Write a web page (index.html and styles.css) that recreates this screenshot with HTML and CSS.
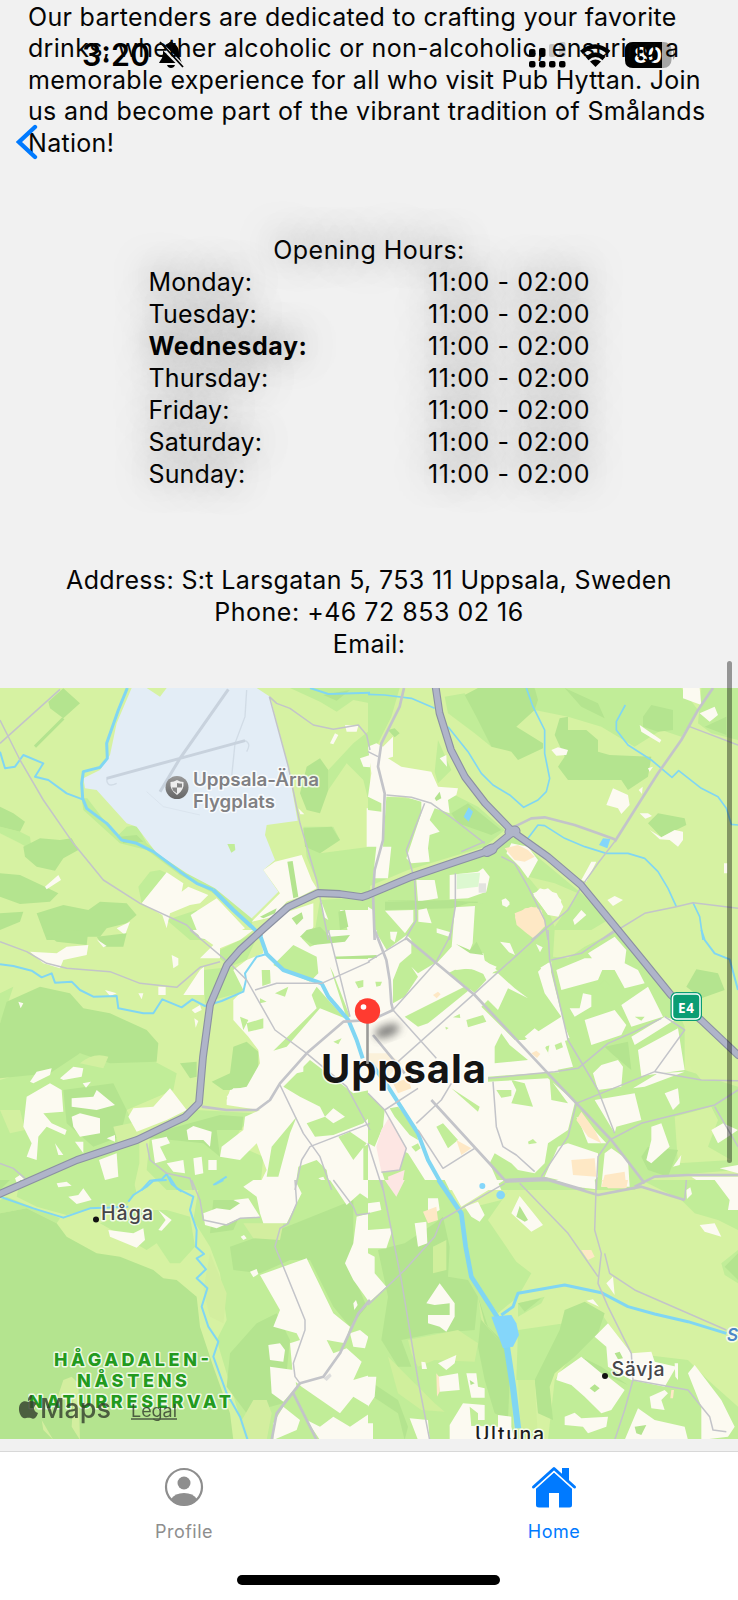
FILE: index.html
```html
<!DOCTYPE html>
<html lang="en">
<head>
<meta charset="utf-8">
<title>Pub Hyttan</title>
<link rel="stylesheet" href="styles.css">
</head>
<body>
<div class="screen">
  <svg class="status" viewBox="0 0 738 90" width="738" height="90">
    <text x="82" y="66" class="clock" textLength="68" lengthAdjust="spacingAndGlyphs">3:20</text>
    <path d="M159 63C161 59 163 58 163 53C163 46 166 44 169 43C170 41 172 41 173 43C177 45 179 48 179 53C179 58 181 60 182 63ZM167 65h8c-1 4-7 4-8 0z"/>
    <path d="M158 42L183 67" stroke="#f1f1f1" stroke-width="5"/>
    <path d="M160 42L183 67" stroke="#000" stroke-width="1.8"/>
    <g>
      <rect x="529" y="61" width="6.500" height="6.500" rx="2"/><rect x="539" y="61" width="6.500" height="6.500" rx="2"/>
      <rect x="549" y="61" width="6.500" height="6.500" rx="2"/><rect x="559" y="61" width="6.500" height="6.500" rx="2"/>
      <rect x="529" y="49" width="6.500" height="8" rx="2"/><rect x="539" y="48" width="6.500" height="9" rx="2"/>
      <rect x="549" y="44" width="6.500" height="13" rx="2" fill="#c5c5c5"/><rect x="559" y="42" width="6.500" height="15" rx="2" fill="#c5c5c5"/>
    </g>
    <g fill="none" stroke="#000" stroke-width="4.500"><path d="M581.500 52.500Q595 40.500 609 52.500"/><path d="M587 58.500Q595.500 51 604 58.500"/></g>
    <path d="M590 61.500Q595.500 57.500 601 61.500L595.500 67Z"/>
    <rect x="625" y="42" width="46.500" height="26" rx="8" fill="#a5a5a5"/>
    <path d="M673 50q4 5 0 10z" fill="#a5a5a5"/>
    <path d="M633 42H662V68H633Q625 68 625 60V50Q625 42 633 42Z"/>
    <text x="634" y="63" class="battery" textLength="28" lengthAdjust="spacingAndGlyphs">80</text>
  </svg>
  <svg class="back" viewBox="0 0 24 38" width="24" height="38"><path d="M19 3L3 18L19 33" fill="none" stroke="#007aff" stroke-width="4.300" stroke-linecap="round"/></svg>

  <p class="about"><span class="l1">Our bartenders are dedicated to crafting your favorite</span><span class="l2">drinks, whether alcoholic or non-alcoholic, ensuring a</span><span class="l3">memorable experience for all who visit Pub Hyttan. Join</span><span class="l4">us and become part of the vibrant tradition of Smålands</span><span class="l5">Nation!</span></p>

  <section class="hours">
    <h2 class="hours-title">Opening Hours:</h2>
    <div class="row"><span>Monday:</span><span class="time">11:00 - 02:00</span></div>
    <div class="row"><span>Tuesday:</span><span class="time">11:00 - 02:00</span></div>
    <div class="row"><span class="today">Wednesday:</span><span class="time">11:00 - 02:00</span></div>
    <div class="row"><span>Thursday:</span><span class="time">11:00 - 02:00</span></div>
    <div class="row"><span>Friday:</span><span class="time">11:00 - 02:00</span></div>
    <div class="row"><span>Saturday:</span><span class="time">11:00 - 02:00</span></div>
    <div class="row"><span>Sunday:</span><span class="time">11:00 - 02:00</span></div>
  </section>

  <section class="contact">
    <div class="address">Address: S:t Larsgatan 5, 753 11 Uppsala, Sweden</div>
    <div class="phone">Phone: +46 72 853 02 16</div>
    <div class="email">Email:</div>
  </section>

  <svg class="map" viewBox="0 688 738 751" width="738" height="751">
    <defs>
      <filter id="soft" x="-50%" y="-50%" width="200%" height="200%"><feGaussianBlur stdDeviation="4"/></filter>
      <linearGradient id="badge" x1="0" y1="0" x2="0" y2="1"><stop offset="0" stop-color="#999"/><stop offset="1" stop-color="#666"/></linearGradient>
    </defs>
    <rect y="688" width="738" height="751" fill="#d6f2a2"/>

    <!-- land cover -->
    <g transform="translate(0 680) scale(.33333)">
      <path class="mid" d="M0 440L60 455 90 470 95 510 60 490 0 460ZM245 355L262 355 350 470 380 440 410 435 440 490 560 580 645 622 760 720 750 745 640 640 540 585 440 510 360 490 250 390ZM415 620L450 575 480 570 500 580 425 670ZM870 24L1110 24 1110 70 1060 60 1010 95 960 65ZM985 270L1060 190 1110 150 1110 380 1090 300 1040 250 985 330ZM910 440L1000 440 1020 480 960 520 1110 500 1110 640 960 630 920 530ZM960 660L1110 650 1110 780 940 780ZM500 720L590 690 640 770 640 780 570 780Z"/>
      <path class="dark" d="M70 500L120 475 180 480 215 475 235 510 190 535 165 572 110 560 75 530ZM0 580L60 585 135 620 175 640 150 665 60 672 0 650ZM0 380L40 400 75 425 60 455 0 440ZM110 700L190 675 265 690 300 665 380 670 410 705 380 730 320 745 300 770 230 770 220 780 140 780ZM0 700L70 695 60 725 0 750ZM145 65L190 25 240 70 190 115 150 85ZM920 260L960 235 985 270 985 330 960 400 920 390 900 340ZM910 445L995 440 1020 480 960 520 915 500ZM360 470L410 465 430 485 370 490ZM970 45L1050 30 1010 62Z"/>
      <path d="M190 115L105 200" stroke="#b3e38f" stroke-width="9"/>
      <path class="airport" d="M395 24L440 24 480 50 500 24 770 24 810 50 860 240 893 422 800 435 795 465 825 540 790 570 835 635 755 715 645 625 560 580 470 520 410 440 380 430 290 330 255 325 250 295 300 270 330 225 350 130Z"/>
      <path class="mid" d="M682 492l22 0 2 18-12 8z"/>
      <g fill="none" stroke="#c8d2dd"><path stroke-width="9" d="M320 295L540 235 735 182M685 28L540 235 480 335"/><path stroke-width="4" d="M740 30L735 110 705 190 695 290M735 182Q755 190 740 215M320 295Q320 325 350 310" opacity=".65"/><path stroke-width="2" d="M440 335L490 380 600 405" opacity=".5"/></g>
      <path class="urban" d="M425 670L500 577 550 610 545 635 565 620 625 645 600 670 570 675 510 700 500 745 487 705ZM572 705L650 655 735 745 700 765 640 780 600 775ZM135 620L175 585 183 600 140 628ZM350 745L390 725 375 765ZM790 570L825 545 905 525 935 600 950 625 900 650 860 665 820 710 755 725 840 640ZM850 700L940 670 940 740 920 780 780 780 800 740ZM1020 690L1110 690 1110 780 1050 780 1040 740ZM990 190L1005 160 1015 165 1000 193ZM1035 135L1075 137 1070 155 1040 155ZM1080 235L1110 225 1110 262 1090 260ZM1100 385h10v115h-10zM960 655L985 720 970 710ZM895 385l18 18-12 0z"/>
      <path class="dark" d="M862 545L878 543 895 650 880 655ZM875 715L905 697 910 715 890 735ZM780 710l50-25-5 15-35 15z"/>
    </g>
    <g transform="translate(368 680) scale(.33333)">
      <path class="mid" d="M0 24L95 24 70 110 30 190 0 200ZM210 180L250 270 210 310 200 275ZM230 50L290 40 330 110 370 200 320 160 280 130 240 100ZM500 24L940 24 990 90 940 170 880 150 800 200 700 140 600 110 500 90ZM170 360L250 340 330 380 410 450 350 500 120 570 0 620 0 345ZM0 650L130 600 360 520 440 470 520 540 640 640 720 720 620 780 0 780ZM1000 24L1110 24 1110 180 1030 160 990 130Z"/>
      <path class="dark" d="M290 45L330 24 500 24 510 60 500 90 445 140 525 190 525 205 450 240 430 215 370 200 325 110ZM560 165L575 115 600 110 600 150 655 150 690 180 690 215 725 225 850 230 840 290 780 330 760 300 720 300 600 300 570 260 590 230ZM590 24L690 70 710 115 640 80ZM825 110L850 75 915 90 915 150 870 155 825 140ZM250 400L300 370 400 450 370 465 270 430ZM60 150l20-5 15 15-15 12zM840 430L870 400 950 415 955 435 880 472ZM1010 140L1075 110 1075 165ZM60 660L330 665 325 680 60 690Z"/>
      <path d="M480 590L560 610 630 640 560 740 520 640Z" fill="#d3f1a0"/>
      <path class="urban" d="M0 200L25 190 45 200 75 170 75 230 60 235 100 260 190 275 210 320 270 325 265 345 240 360 245 400 200 385 185 420 215 455 185 465 180 505 185 545 130 550 115 535 160 400 160 365 110 350 55 350 45 500 0 500 0 390 40 395 40 370 0 350 10 280ZM25 500L70 500 60 595 15 595ZM145 600L200 600 210 655 150 665ZM245 585L330 575 345 565 365 590 355 635 300 655 245 658ZM260 685L320 680 315 780 205 750 255 745ZM55 690L145 690 125 755 90 735ZM155 690l25-5 10 45-40-5zM0 680L15 690 15 780 0 780ZM430 490L480 500 510 540 480 595 455 560 415 520ZM495 640L540 625 580 660 570 705 540 705ZM615 720L640 690 655 705 620 735ZM640 600L670 545 685 545 655 605ZM718 660L740 648 765 660 735 678ZM402 672l12-12 12 12-12 12zM715 375L735 325 780 345 785 375 760 402 750 385ZM815 135L880 180 875 188 820 155ZM550 210l20-8 30 8-5 15-30 2ZM945 24L995 24 1000 75 945 55ZM995 100L1040 80 1050 105 1025 125ZM815 400l25 0 12 8-20 8ZM845 450L880 472 920 450 945 455 945 480 930 500 905 480 875 478ZM215 235l20-10 2 35ZM840 265l15-5-10 15zM812 330l12-10-2 22zM1068 550h10v30h-10z"/>
      <path d="M332 610h22v28h-22z" fill="#e3e3df"/>
      <path class="dark" d="M200 355l15-20 5 20-15 8z"/>
      <path class="peach" d="M410 505L450 495 480 510 500 530 470 545 440 540ZM440 700L490 680 520 690 535 740 500 775 450 750Z"/>
    </g>
    <g transform="translate(0 930) scale(.33333)">
      <path class="mid" d="M0 450L100 420 240 370 465 395 530 430 520 480 380 540 400 580 418 640 418 700 400 780 0 780ZM610 120L700 110 740 150 730 185 640 210 615 220ZM450 620L590 540 770 550 720 600 700 640 790 680 780 780 500 780 440 720ZM640 70L780 0 740 90 690 110ZM0 190L40 170 20 230 0 280Z"/>
      <path class="dark" d="M0 280L20 215 120 170 210 190 250 235 330 250 440 300 475 340 470 395 330 400 240 370 150 430 0 445ZM130 5L265 0 260 45 170 35ZM290 20L380 10 370 50 310 50ZM700 350L740 335 775 365 775 410 740 480 670 480 635 455 690 430ZM540 400L590 395 590 440 570 445ZM190 480L340 460 380 540 360 620 280 650 200 580ZM420 620L660 555 730 560 725 600 650 600 660 680 610 640Z"/>
      <path d="M240 400Q280 365 325 380L310 415ZM0 540L60 540 75 600 30 610ZM340 590L412 575 412 640 360 660Z" fill="#d3f0a0"/>
      <path class="urban" d="M700 120L740 90 790 70 780 0 1112 0 1112 780 770 780 800 720 770 640 740 670 720 690 660 680 665 650 730 600 735 560 780 540 680 525 680 510 690 480 740 470 780 400 775 360 745 320 700 270 700 210 730 180ZM80 500L150 460 185 480 190 545 130 550 155 580 200 600 195 615 140 590 115 620 110 690 80 680 95 640 70 590ZM215 505L280 500 290 480 345 525 290 540 215 530ZM215 560L240 550 300 565 300 610 240 620 220 590ZM385 560L400 535 460 530 510 475 560 540 500 570 410 605ZM90 455L110 425 155 415 150 435 100 460ZM180 445L220 410 250 415 245 440 190 450ZM248 460l25-5-15 18zM297 690L350 670 355 740 315 750ZM165 640l25 35-15 0zM225 635l25 0 0 35zM320 625l25-10 0 20zM455 630L500 620 510 640 480 650 500 690 465 700ZM560 600L580 588 635 605 630 650 610 630 565 630ZM500 700L550 690 555 730 520 725ZM580 685l25-5 5 50-25 5zM625 690h25v30h-25zM550 195L600 120 612 110 612 195ZM475 170h22v25h-22zM515 75l20 10 0 20-15 10zM90 65L170 70 200 50 265 45 260 75 190 90 180 115 130 100ZM575 0L760 0 720 30 660 55 660 85 600 85 640 45ZM575 240l25-15 5 15-20 10zM315 180l35 10-20 8zM415 190l15 0-5 18zM55 215l15 5-8 15zM583 265l12 8-8 20zM45 745l15-10 15 15-25 8zM290 28l30 20-10 4z"/>
      <path class="mid" d="M820 105L880 45 950 80 955 130 930 155 860 125ZM905 25L960 0 990 0 970 35 930 50ZM785 120l25 0 2 40-25 8zM820 362L950 235 935 195 950 170 985 210 1035 265 960 235 860 350ZM850 470L930 390 1060 490 1110 480 1110 560 1090 580 1000 615 945 620 920 580 975 560 960 530 900 500ZM885 780L895 710 950 690 980 720 990 780ZM800 740L815 650 890 560 870 610 835 740ZM1015 620L1050 605 1100 640 1060 690ZM740 280l50-15 0 30-45 10zM1065 155l25-5 0 20-15 5zM825 190l40-20-10 30zM1000 335l25-10-10 18zM1005 80h105v7h-105zM720 260l25 10-15 30zM1000 130L1050 260 1040 265 990 110ZM1090 650L1110 640 1110 780 1090 780ZM780 205l20 10-20 5z"/>
      <path class="urban" d="M870 415L910 400 910 425 890 430ZM975 560L1000 535 1035 560 1000 580ZM955 745l15-5 10 20zM680 500L700 475 740 475 735 500 760 490 765 515 700 525Z"/>
    </g>
    <g transform="translate(368 930) scale(.33333)">
      <path class="urban" d="M0 0L530 0 600 330 640 520 720 630 700 780 0 780Z"/>
      <path class="mid" d="M520 0L750 0 910 195 950 290 950 420 1110 470 1110 720 850 740 800 780 700 780 740 640 620 520 570 420 530 350 600 330 545 110ZM75 220L75 150 95 100 130 70 130 20 230 0 250 15 240 50 200 100 150 130 130 110 150 140 110 200ZM240 130L270 115 340 120 355 150 320 188ZM110 260L150 240 300 165 310 175 180 280 150 290ZM390 130L370 130 400 115 440 80 530 0 545 90 510 125 530 190 580 260 470 330 440 330 340 230 360 210 390 240 420 175 480 205 440 175ZM295 270L345 255 355 275 300 292ZM380 390L380 350 400 310 425 345 480 390 380 400ZM360 440L530 428 590 425 640 415 700 495 625 520 540 445 360 455ZM385 480l45 0 0 18-30 5zM430 450L470 460 495 530 430 520 445 480ZM250 475L335 530 330 545ZM205 590L225 580 270 630 240 655ZM0 490L50 540 45 590 20 650 0 640ZM65 535L90 530 145 590 150 630 125 615 80 560ZM40 720L80 650 120 670 190 780 60 780ZM380 670L430 700 450 720 500 730 530 700 540 640 600 600 620 520 680 560 730 620 830 760 720 780 400 780 365 700ZM480 635l15-8 12 12-25 4zM22 155l20 0-5 12-12 3zM232 290l10 4-8 5zM255 262l20-10 2 12zM545 445L600 520 550 510Z"/>
      <path d="M650 50L750 0 560 0 555 80 600 85ZM920 560L1030 530 1050 570 1020 650 1090 690 930 700ZM960 240L1110 340 1110 450 1000 450 960 400 950 300Z" fill="#d5f2a1"/>
      <path class="dark" d="M955 170L985 118 1050 130 1070 180 1000 205ZM710 350L780 335 790 420 730 370ZM820 680L840 650 930 660 900 740 840 720Z"/>
      <path class="urban" d="M565 120L650 85 680 85 705 115 690 150 580 180ZM660 70L740 20 775 60 770 100 810 120 830 160 770 175 740 120 700 120ZM760 225L840 170 885 260 790 290ZM650 270L740 240 775 285 760 315 670 345ZM790 320L890 260 920 270 840 320 800 345ZM810 360L930 295 950 420 820 438ZM605 235l30 0 10-45 25 5 0 35-50 30zM675 430L700 405 750 390 765 410 760 470 690 480ZM680 510L800 490 820 570 745 590 740 610ZM795 475L870 430 950 425 830 470ZM545 340L590 330 615 410 565 420 540 370ZM470 320L500 295 545 330 525 365ZM515 110L550 95 545 185 530 130ZM530 310L580 262 605 325ZM890 490l40-15 5 45-20 20zM850 590L880 580 905 650 850 700 835 690 850 630ZM1030 600L1065 580 1110 600 1080 620 1050 640ZM915 710l25-35-5 30zM570 650L600 640 690 670 690 740 660 770 530 740ZM710 670L730 655 780 690 785 770 700 770ZM1055 715L1110 705 1110 730ZM970 740L1110 740 1110 780 1030 780ZM625 560L660 580 715 640 660 640 640 590Z"/>
      <path class="mid" d="M695 165l15-15 15 15-10 15zM800 260l30 0-10 12zM560 345l20-8 5 15-20 8zM130 650l20-10 8 15-15 10z"/>
      <path d="M40 600L65 560 115 655 95 720 40 725 25 650ZM60 740L110 720 100 780 65 780Z" fill="#fde6e3"/>
      <path class="peach" d="M610 690L680 685 685 740 615 735ZM710 735L770 725 775 775 700 770ZM640 545L680 600 700 640 660 620 625 570ZM265 630L310 655 280 675ZM75 460L120 445 130 475 90 490ZM195 195l15-10 8 8-12 12zM490 370l15-8 12 10-10 12z"/>
      <path d="M0 370L60 370 100 400 60 440 0 430Z" fill="#fbf1da"/>
    </g>
    <g transform="translate(270 820) scale(.33333)">
      <path class="mid" d="M320 240L640 250 700 250 740 300 830 320 840 425 800 450 680 450 620 400 560 360 545 390 500 430 410 345 350 390 320 340ZM560 370L620 375 690 330 740 330 800 340 690 450Z"/>
      <path class="dark" d="M345 245L545 240 600 248 545 265 345 270Z"/>
      <path class="urban" d="M345 272L430 270 430 305 405 340ZM445 270l25-5 15 45-40-5zM555 262L615 258 608 370 600 390 640 400 645 425 680 440 660 470 600 445 560 450 500 430 545 380ZM500 325l42 12-5 13-37-12zM690 365l30 5 15 35-18-8zM360 335l22 0-8 32-12-10zM798 372l20 10-8 15zM695 240l12-5 12 12-10 14-12-5zM790 225L810 205 860 220 880 260 865 290 835 285Z"/>
      <path class="dark" d="M558 372L600 390 620 365 640 405 600 400ZM90 350L110 330 150 320 180 350 240 345 225 365 130 375ZM195 410L320 405 320 414 195 416ZM205 275l20-5 10 50-25 10z"/>
      <path class="peach" d="M735 290L765 265 800 262 828 315 790 355 770 340 740 315Z"/>
      <path d="M560 162L630 158 625 200 560 208Z" fill="#dcf8d0"/>
    </g>
    <g transform="translate(0 1180) scale(.33333)">
      <path class="mid" d="M60 0L400 0 410 40 380 75 300 80 200 105 110 80 50 50ZM0 60L20 50 180 115 170 130 80 85 0 100ZM300 130L400 90 500 90 570 110 585 200 540 250 510 250 470 190 440 210ZM600 0L1110 0 1110 780 740 780 650 480 680 420 660 280 630 200 580 120Z"/>
      <path class="dark" d="M0 100L80 85 170 130 200 170 290 220 360 230 460 270 490 295 530 300 590 350 600 440 640 560 690 700 700 780 0 780ZM640 60L740 60 700 150 630 160ZM690 200L860 140 1060 60 1060 200 1050 260 1100 380 1050 440 1000 380 930 240 870 240 780 280 700 270ZM690 520L770 430 830 400 870 480 850 670 740 700 680 620ZM0 30L0 0 30 0Z"/>
      <path d="M190 600L215 590 235 610 240 780 215 740 220 660 170 660ZM125 720L160 780 130 750ZM630 220L680 340 670 430 630 410 610 330ZM760 660L800 660 815 700 800 780 740 780 720 730ZM730 130L850 130 840 180 760 175Z" fill="#d3ee9f"/>
      <path class="urban" d="M730 20L760 0 885 0 905 40 860 130 790 130 780 100 770 50ZM610 100L650 85 690 90 720 70 700 60 745 55 780 110 720 115 650 145 615 135ZM780 285L920 235 1000 400 1050 440 1035 490 980 480 1000 520 1040 505 1085 545 1060 600 1110 585 1110 680 1060 650 1020 700 905 620 880 600 870 490 900 480 890 460 820 440 840 390ZM805 495l35-5 15 20-5 35-40-5zM810 560L880 570 890 620 850 665 815 640ZM850 680L900 720 890 750 820 780 820 730ZM1050 460l30-10 25 20-10 35-35-5zM990 0L1110 0 1110 60 1080 40 1040 75ZM1070 110L1110 100 1110 370 1060 300 1035 250 1060 190ZM920 720L960 740 1000 710 1050 740 1110 700 1110 780 960 780ZM325 150L400 160 430 145 435 180 410 203 330 170ZM475 90L515 120 485 152 475 150 497 120ZM205 50L235 45 250 25 275 60 230 72ZM750 275l20-8 5 15-15 10zM170 10l30-5 15 12-40 5zM722 170l10-5 8 10-10 5zM1060 370l8-10 5 15-10 15z"/>
      <path d="M970 595l20-15 5 8-15 15z" fill="#ddd"/>
    </g>
    <g transform="translate(368 1180) scale(.33333)">
      <path class="mid" d="M0 0L230 0 280 100 300 250 380 400 420 500 440 780 0 780ZM280 90L400 60 430 20 360 120 445 245 490 280 450 350 390 400 310 290ZM450 450L590 430 560 560 500 600 445 600ZM450 370L530 350 520 370 450 410ZM560 600L700 400 720 430 790 520 960 540 1020 600 1110 680 1110 780 540 780ZM820 0L1110 0 1110 150 1050 120 980 100 940 60ZM1060 250l50-40 0 100-40-25z"/>
      <path class="dark" d="M30 210L110 190 200 130 225 110 245 200 240 290 300 300 330 350 320 450 200 460 100 480 130 560 90 560 40 480 60 350ZM330 350L360 440 410 490 425 600 420 720 380 700 350 600 330 500 340 400ZM575 450L590 390 650 365 710 400 690 460 620 530 560 580 545 620 555 720 510 700 500 600ZM0 600L90 660 120 740 110 780 90 700 0 640ZM450 370L520 355 470 395ZM1070 260L1110 220 1110 300Z"/>
      <path d="M120 480L270 450 330 490 320 545 200 540 150 560 130 520ZM60 530L130 600 200 670 230 695 160 690 90 640ZM330 350L340 420 400 490 350 430ZM195 200L235 180 235 270 195 280ZM450 600L500 600 510 780 460 780Z" fill="#d0ef9c"/>
      <path class="urban" d="M235 0L410 0 280 80ZM290 80L330 65 350 105 335 125 310 110ZM430 100L455 48 525 135 490 155ZM560 0L680 0 685 28 620 20ZM0 70L35 65 40 90 0 100ZM0 150L70 145 70 160 55 205 0 205ZM0 220L20 230 20 280 55 320 0 370ZM140 130L175 125 178 190 150 200ZM180 55L210 55 215 90 180 110ZM175 370L215 310 260 370 260 410 235 455 215 440 180 430 180 405 245 405 245 370 200 375ZM210 550L265 525 260 550 235 570ZM210 590L270 580 275 630 215 635ZM295 580h30l5 40 20 5 0 28-40 0zM285 670L350 675 350 720 330 720 330 700 305 680 310 740 245 735ZM390 705L430 710 430 740 440 780 245 780 245 735 390 740ZM125 715L180 720 185 780 150 780ZM0 590L25 590 20 650 0 680ZM0 730h15v50h-15zM565 600L570 580 640 530 690 560 720 590 770 630 730 690 700 700 650 650 610 615ZM680 470L720 430 790 520 850 515 860 545 925 560 890 620 790 600 720 560 715 500ZM590 710L620 698 640 715 720 710 715 740 660 760 645 740 590 735ZM770 780L810 685 860 720 950 740 960 780ZM845 650L890 630 900 640 880 660 890 690 850 685ZM960 580L980 555 1060 660 1100 740 1080 770 1000 780 1000 680ZM715 310L735 290 740 345ZM655 362l20-4 18 22zM995 135L1040 130 1060 170 1010 155ZM1040 0L1110 0 1110 90 1080 90 1085 60ZM160 545l12 2 5 20-15 0zM920 550l10 0 0 50-8-10zM955 30l12-8 5 20-15 15z"/>
      <path class="dark" d="M445 110L455 78 480 120 470 125ZM665 625l15-12 15 12-15 12zM740 520l15-5 10 20-15 3zM800 740l35-5-15 30-15-5zM640 530L700 560 780 615 700 580ZM305 600l15 10-12 5z"/>
      <path class="peach" d="M700 0L780 0 775 25 720 25ZM165 95L205 80 210 120 180 130ZM640 210l30 0 10 20-20 10zM205 580l8 10 2 45-8 15zM910 630l8 0-3 25-8 0z"/>
      <path d="M50 0L110 0 85 50Z" fill="#fde6e3"/>
    </g>

    <!-- water -->
    <g class="water" transform="translate(0 680) scale(.33333)">
      <path stroke-width="9" d="M382 24L355 90 320 190 322 235 300 262 250 275 245 310 248 355 260 385 320 430 365 480 410 490 460 515 540 575 590 610 640 630"/>
      <path stroke-width="12" d="M640 630L700 690 755 740 785 770"/>
      <path d="M0 215L15 265 45 260 70 225 130 250 105 290 145 300 200 340 248 358M930 24L985 42 1110 38"/>
    </g>
    <g class="water" transform="translate(368 680) scale(.33333)">
      <path stroke-width="5" d="M0 43L50 45 130 55 200 85M240 140L300 215 340 280 375 315 425 345 467 382 510 360 535 335 545 295 530 220 530 150 495 80 475 24M772 75L745 125 745 150 780 195 850 240 912 292 932 272 1000 325 1050 350 1075 385 1090 433 1110 435M480 475L510 435 530 437 590 475 650 500 715 520 780 520 830 535 870 575 900 625 925 680M975 668L995 710 1005 780"/>
      <path class="lake" d="M287 410L302 382 315 395 302 425ZM693 495L705 475 727 477 718 505Z"/>
    </g>
    <g class="water" transform="translate(0 930) scale(.33333)">
      <path d="M0 103L40 108 95 122 125 142 155 130 165 158 215 155 240 180 280 200 350 198 355 235 430 250 460 250 487 208 545 232 577 208 615 228 665 213 730 185 738 150 735 130 770 80 800 72M425 780L450 752 485 748 500 732 515 762 545 785M640 765L680 740"/>
      <path stroke-width="12" d="M780 15L800 72 850 120 965 160 985 200 1045 270 1070 330 1088 385"/>
    </g>
    <g class="water" transform="translate(368 930) scale(.33333)">
      <path stroke-width="12" d="M10 400L60 470 150 610 180 690 225 770"/>
      <path d="M1000 0L1010 30 1040 70 1085 88 1110 180"/>
      <circle class="lake" cx="343" cy="768" r="9"/>
    </g>
    <g class="water" transform="translate(0 1180) scale(.33333)">
      <path d="M0 50L100 85 190 113 270 85 385 80M385 65L400 45 440 20 460 2 500 0M508 -10L530 25 580 50 570 90 590 150 588 200 612 222 590 235 618 268 590 295 622 325 605 380 625 440 655 485 640 530 680 640 720 710 743 780M645 13L670 0"/>
    </g>
    <g class="water" transform="translate(368 1180) scale(.33333)">
      <path stroke-width="14" d="M212 0L280 100 293 200 310 290 400 430"/>
      <path stroke-width="19" d="M415 490L435 620 450 745"/>
      <path class="lake" d="M370 410L430 405 445 430 453 465 435 500 405 505Z"/>
      <path stroke-width="9" d="M400 405L435 380 450 340 590 315 700 338 780 380 860 402 960 425 1075 460"/>
      <circle class="lake" cx="398" cy="45" r="13"/>
    </g>

    <!-- streets -->
    <g class="road" transform="translate(0 680) scale(.33333)">
      <path d="M0 120L60 240 130 360 220 490 310 600 420 670 560 735 605 780M0 190L180 28M808 50L865 260 900 430 950 600 985 780M808 50L830 70 870 85 940 135 1000 148 1075 135 1100 165 1110 210"/>
    </g>
    <g class="road" transform="translate(368 680) scale(.33333)">
      <path class="wide" d="M1035 24L990 90 940 180 870 280 800 390 740 485M440 440L490 415 530 412 620 435 690 460 740 478M108 24L95 80 40 190 30 260 50 340 45 480 20 570 15 640 20 780"/>
      <path d="M740 485L690 550 640 620 600 690 540 740 490 780M55 345L130 352 190 370 260 420 350 490M280 515L350 485M400 530L440 550 480 620 530 720 540 780M170 370L115 510 140 600 145 720 110 780M262 580L262 680 245 780M700 780L830 700 925 680 975 668 1110 685M965 140L1110 195M0 215L30 230"/>
    </g>
    <g class="road" transform="translate(0 930) scale(.33333)">
      <path class="wide" d="M605 530L680 540 770 540 810 510 840 460 920 370 1030 275 1110 270"/>
      <path d="M0 35L80 65 140 100 200 115 330 125 420 160 530 172 600 112 660 95M570 0L700 110 740 150 825 300 920 370 1040 470 1110 600M840 465L910 610 960 680 995 780M885 780L905 690 930 650 1110 580M985 0L1050 260M765 180L830 160 965 160 1110 95M440 640L450 690 500 730 570 745 580 780M0 700L40 715 75 745"/>
    </g>
    <g class="road" transform="translate(368 930) scale(.33333)">
      <path class="wide" d="M20 0L55 90 65 150 70 220 75 240 0 275M115 25L200 95 320 195 540 430 730 630 830 760M15 315L110 430M190 510L410 750 530 745 650 780M800 770L860 740 960 735 1110 735"/>
      <path d="M0 95L115 25M250 0L240 30 205 95 75 240M530 0L320 190 90 395M75 240L205 385M540 0L545 90 600 330 690 480 740 610M550 90L640 70 740 0M375 455L385 590 405 650 445 675 500 725M360 445L560 425 630 415 720 340 800 305 880 265M625 520L600 620 520 740M625 520L860 425 950 300 890 260M860 425L1000 450 1110 452M725 630L690 680 685 780M725 630L820 580 1040 525 1110 480M1040 530L1110 650M0 640L45 780M145 580L220 510 250 460M320 655L225 715 150 600M50 540L150 475M50 540L115 655 95 720 40 727M0 490L50 540"/>
    </g>
    <g class="road" transform="translate(0 1180) scale(.33333)">
      <path d="M575 0L600 60 610 120 680 135 720 115 780 112M885 0L890 70 865 130 840 145 825 200 850 260 915 420 915 450 880 550 885 590 900 610M1000 0L1060 80 1070 105 1110 100"/>
      <path class="wide" stroke-width="6" d="M1110 360L1075 400 1020 520 970 590 900 610 830 700 815 780M880 640L950 780"/>
    </g>
    <g class="road" transform="translate(368 1180) scale(.33333)">
      <path class="wide" d="M410 5L540 0 690 45 820 20 950 60"/>
      <path d="M280 85L410 10M455 10L600 160 690 290M685 0L680 150 700 220 690 310 720 380 790 520 795 600 770 690 740 780M710 220L725 280 800 330 1075 450M40 0L100 300 150 600 185 780M280 85L220 120 200 170 110 270 0 375M795 600L960 630 1025 710 1035 750 1075 755M950 60L955 0"/>
    </g>

    <!-- highways -->
    <g fill="none" stroke-linejoin="round" stroke-linecap="round">
      <g stroke="#8b90a2">
        <path stroke-width="7.800" d="M435.500 686L439.500 713 451 750 465 777 485 803 513 832 548 857 581 885 618 930 645 963 671 995 701 1020 738 1055"/>
        <path stroke-width="7.800" d="M513 832L491 850 455 862 411 877 368 895 362 897 340 894 318 893 288 907 262 930 240 950 227 965 210 1005 203 1057 199 1103 185 1117 137 1140 77 1160 20 1185 -3 1195"/>
        <path stroke-width="11" d="M510 832L515 831M487 851.500L492 849"/>
      </g>
      <g stroke="#afb4c9">
        <path stroke-width="5.600" d="M435.500 686L439.500 713 451 750 465 777 485 803 513 832 548 857 581 885 618 930 645 963 671 995 701 1020 738 1055"/>
        <path stroke-width="5.600" d="M513 832L491 850 455 862 411 877 368 895 362 897 340 894 318 893 288 907 262 930 240 950 227 965 210 1005 203 1057 199 1103 185 1117 137 1140 77 1160 20 1185 -3 1195"/>
        <path stroke-width="9" d="M510 832L515 831M487 851.500L492 849"/>
      </g>
    </g>

    <!-- labels -->
    <circle cx="177" cy="787.500" r="11.500" fill="url(#badge)"/>
    <path d="M170.500 782Q174 782 177 780Q180 782 183.500 782Q184.500 790 177 795Q169.500 790 170.500 782Z" fill="#eee"/>
    <path d="M177 783v4.500h-5l1 3 4 3v-6h5v-4q-3 0-5-.500Z" fill="#858585"/>
    <g class="label place">
      <text x="193" y="785.500" textLength="126" lengthAdjust="spacingAndGlyphs">Uppsala-Ärna</text>
      <text x="193" y="808" textLength="82" lengthAdjust="spacingAndGlyphs">Flygplats</text>
    </g>
    <rect x="670.500" y="992" width="31.500" height="29" rx="6" fill="#0a9d73"/>
    <rect x="672.500" y="994" width="27.500" height="25" rx="4" fill="none" stroke="#fff" stroke-width="1.500"/>
    <text x="678" y="1012.500" class="shield" textLength="16">E4</text>
    <ellipse cx="387" cy="1031" rx="13" ry="6" fill="#555" opacity=".75" filter="url(#soft)" transform="rotate(-20 387 1031)"/>
    <text x="321" y="1083" class="label city" textLength="165">Uppsala</text>
    <path d="M367.500 1020V1064" stroke="#9b9b99" stroke-width="2.600"/>
    <circle cx="367.500" cy="1011" r="12.700" fill="#ff3b30"/><circle cx="363.500" cy="1007" r="2.800" fill="#fff"/>
    <circle cx="96" cy="1219.500" r="3" fill="#111"/><circle cx="605" cy="1376" r="3" fill="#111"/>
    <g class="label town">
      <text x="101" y="1219.500" textLength="52">Håga</text>
      <text x="611.500" y="1376" textLength="53">Sävja</text>
    </g>
    <text x="475" y="1441" class="label town ultuna" textLength="69">Ultuna</text>
    <text x="727" y="1341" class="label stream">S</text>
    <g class="label reserve">
      <text x="54" y="1365.500" textLength="155">HÅGADALEN-</text>
      <text x="77" y="1386.500" textLength="110">NÅSTENS</text>
      <text x="29" y="1408" textLength="202">NATURRESERVAT</text>
    </g>
    <g class="credit" opacity=".82">
      <path d="M28 1402C31 1400 35 1401 36.500 1404C33 1407 33 1411 38 1413C36 1419 33 1419.500 31 1418C29 1417.500 28 1417.500 26 1418C22 1420 18.500 1413 19 1408C19.500 1402 24 1400 28 1402ZM28 1401Q27.500 1396 32 1395Q32.500 1400 28 1401Z"/>
      <text x="40" y="1418" class="maps" textLength="71" lengthAdjust="spacingAndGlyphs">Maps</text>
      <text x="131" y="1417" class="legal" textLength="46" lengthAdjust="spacingAndGlyphs">Legal</text>
    </g>
    <path d="M131 1419h46" stroke="#4d5d43" stroke-width="1.500"/>
  </svg>
  <div class="scrollbar"></div>

  <nav class="tabs">
    <a class="tab profile">
      <svg viewBox="0 0 40 40" width="40" height="40"><circle cx="20" cy="20" r="18" fill="none" stroke="#8e8e8e" stroke-width="2.200"/><circle cx="20" cy="16" r="6.500" fill="#8e8e8e"/><path d="M7 32Q11 26 20 26Q29 26 33 32Q28 38.500 20 38.500Q12 38.500 7 32Z" fill="#8e8e8e"/></svg>
      <span>Profile</span>
    </a>
    <a class="tab active">
      <svg viewBox="0 0 46 42" width="46" height="42" fill="#007aff"><path d="M31 2H38V18L31 11Z"/><path d="M5 22L23 6 41 22V39Q41 41.500 38.500 41.500H28V27H18V41.500H8Q5 41.500 5 39Z"/><path d="M2.500 21L23 2.500 43.500 21" fill="none" stroke="#fff" stroke-width="6"/><path d="M31 2H38V15L31 9Z"/><path d="M2.500 21L23 2.500 43.500 21" fill="none" stroke="#007aff" stroke-width="3" stroke-linecap="round" stroke-linejoin="round"/></svg>
      <span>Home</span>
    </a>
  </nav>
  <div class="home-indicator"></div>
</div>
</body>
</html>
```
FILE: styles.css
```css
body { margin: 0; background: #f1f1f1; }
.screen {
  position: relative;
  width: 738px;
  height: 1600px;
  overflow: hidden;
  display: flex;
  flex-direction: column;
  font-family: Inter, "Liberation Sans", sans-serif;
  font-size: 25px;
  line-height: 32px;
  color: #050505;
}
.status { position: absolute; left: 0; top: 0; }
.clock { font-size: 31px; font-weight: 600; }
.battery { font-size: 22px; font-weight: 700; fill: #fff; }
.back { position: absolute; left: 16px; top: 124px; z-index: 2; }
.about {
  position: relative;
  display: flex;
  flex-direction: column;
  margin: 0;
  padding: 2px 0 0 28px;
  line-height: 31.4px;
  letter-spacing: .3px;
  white-space: nowrap;
}
.l3 { letter-spacing: .26px; }
.l4 { letter-spacing: .34px; }
.hours {
  width: 441px;
  margin: 75px auto 0;
  letter-spacing: .15px;
  text-shadow: 0 -4px 34px rgba(0, 0, 0, .5);
}
.hours-title { margin: 0; font-size: 25px; font-weight: 400; text-align: center; letter-spacing: .45px; }
.row { display: flex; justify-content: space-between; }
.today { font-weight: 700; letter-spacing: .6px; }
.time { letter-spacing: .6px; margin-right: -.6px; }
.contact { margin-top: 74px; text-align: center; letter-spacing: .36px; }
.phone { letter-spacing: .5px; }
.map { display: block; margin-top: 28px; flex: none; }
.mid { fill: #c1ed98; }
.dark { fill: #b4e48f; }
.urban { fill: #fcfaf1; }
.airport { fill: #e3edf6; }
.peach { fill: #fee8c5; }
.water { fill: none; stroke: #80d6f3; stroke-width: 6; stroke-linejoin: round; }
.water .lake { fill: #84d6fa; stroke: none; }
.road { fill: none; stroke: #c3c4c9; stroke-width: 4.5; stroke-linejoin: round; }
.road .wide { stroke-width: 8; }
.label { paint-order: stroke; stroke: rgba(255, 255, 255, .8); stroke-width: 3px; stroke-linejoin: round; }
.place { font-size: 18px; font-weight: 600; fill: #808083; }
.shield { font-family: "Open Sans", sans-serif; font-size: 13.5px; font-weight: 700; fill: #fff; }
.city { font-size: 40px; font-weight: 700; fill: #151515; }
.town { font-size: 19.5px; font-weight: 500; fill: #46464a; }
.ultuna { fill: #1c1c1c; }
.stream { font-size: 17px; font-style: italic; font-weight: 600; fill: #4c87c7; }
.reserve { font-size: 18px; font-weight: 800; fill: #239a1e; }
.credit { fill: #35412e; }
.maps { font-size: 27px; font-weight: 500; }
.legal { font-size: 17px; }
.scrollbar {
  position: absolute;
  left: 727px;
  top: 661px;
  width: 5px;
  height: 502px;
  border-radius: 3px;
  background: rgba(0, 0, 0, .38);
}
.tabs {
  display: flex;
  flex: 1;
  margin-top: 12px;
  border-top: 1px solid #d8d8d8;
  background: #fff;
}
.tab {
  flex: 1;
  display: flex;
  flex-direction: column;
  align-items: center;
  padding-top: 14px;
  font-size: 18px;
  line-height: 24px;
  letter-spacing: .5px;
  color: #8e8e8e;
}
.profile { padding-right: 2px; }
.tab svg { height: 42px; }
.tab span { margin-top: 12px; }
.active { color: #007aff; }
.home-indicator {
  position: absolute;
  left: 237px;
  top: 1575px;
  width: 263px;
  height: 10px;
  border-radius: 5px;
  background: #000;
}
```
